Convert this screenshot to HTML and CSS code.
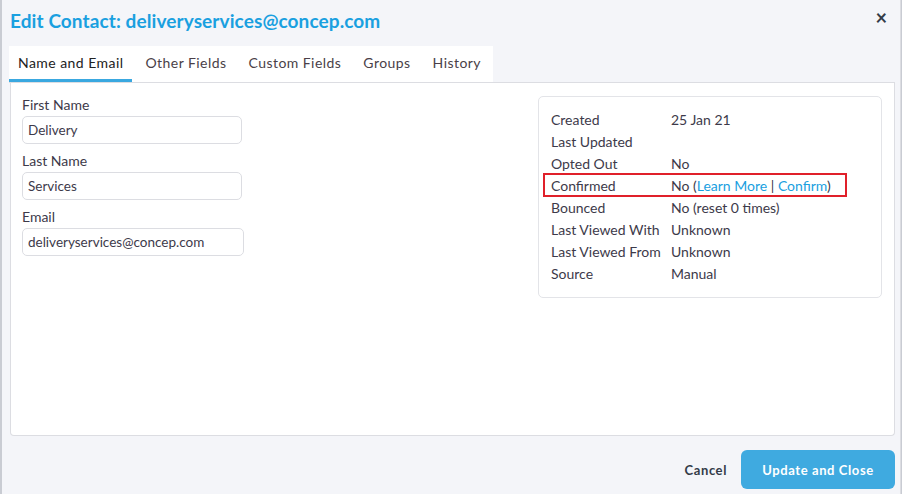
FILE: index.html
```html
<!DOCTYPE html>
<html lang="en">
<head>
    <meta charset="UTF-8">
    <title>Edit Contact</title>
    <link rel="stylesheet" href="styles.css">
</head>
<body>
    <div class="modal">
        <div class="modal-header">
            <h2>Edit Contact: deliveryservices@concep.com</h2>
            <span class="close">&times;</span>
        </div>
        <div class="tabs">
            <a class="tab active">Name and Email</a>
            <a class="tab">Other Fields</a>
            <a class="tab">Custom Fields</a>
            <a class="tab">Groups</a>
            <a class="tab">History</a>
        </div>
        <div class="panel">
            <form class="fields">
                <div class="form-group">
                    <label for="firstName">First Name</label>
                    <input type="text" id="firstName" value="Delivery">
                </div>
                <div class="form-group">
                    <label for="lastName">Last Name</label>
                    <input type="text" id="lastName" value="Services">
                </div>
                <div class="form-group">
                    <label for="email">Email</label>
                    <input type="text" id="email" class="wide" value="deliveryservices@concep.com">
                </div>
            </form>
            <div class="info">
                <div class="row"><span class="key">Created</span><span>25 Jan 21</span></div>
                <div class="row"><span class="key">Last Updated</span><span></span></div>
                <div class="row"><span class="key">Opted Out</span><span>No</span></div>
                <div class="row highlight"><span class="key">Confirmed</span><span>No (<a>Learn More</a> | <a>Confirm</a>)</span></div>
                <div class="row"><span class="key">Bounced</span><span>No (reset 0 times)</span></div>
                <div class="row"><span class="key">Last Viewed With</span><span>Unknown</span></div>
                <div class="row"><span class="key">Last Viewed From</span><span>Unknown</span></div>
                <div class="row"><span class="key">Source</span><span>Manual</span></div>
            </div>
        </div>
        <div class="modal-footer">
            <button class="cancel">Cancel</button>
            <button class="primary">Update and Close</button>
        </div>
    </div>
</body>
</html>
```

FILE: styles.css
```css
html, body {
    margin: 0;
    padding: 0;
    height: 100%;
}
body {
    font-family: Lato, "Open Sans", sans-serif;
    background-color: #c9ccd3;
    color: #3d3a4a;
    padding: 0 1px 0 2px;
    box-sizing: border-box;
}
.modal {
    background-color: #f4f5f9;
    height: 494px;
    box-sizing: border-box;
    padding: 0 5px 0 7px;
    border-right: 1px solid #dcdde2;
}
.modal-header {
    display: flex;
    justify-content: space-between;
    align-items: center;
    height: 40px;
    padding: 0 8px 0 1px;
}
.modal-header h2 {
    margin: 0;
    font-size: 19px;
    font-weight: 700;
    color: #1aa0e0;
    letter-spacing: 0.1px;
}
.close {
    font-size: 20px;
    font-weight: 700;
    color: #333b48;
    line-height: 1;
    margin-top: -6px;
}
.tabs {
    display: flex;
    margin-top: 6px;
    height: 36px;
    border-bottom: 1px solid #dcdde2;
    background: linear-gradient(to right, #fff 484px, transparent 484px);
}
.tab {
    padding: 8px 9px 0;
    margin-right: 4px;
    font-size: 14px;
    letter-spacing: 0.45px;
    color: #4a3f48;
    box-sizing: border-box;
    height: 36px;
}
.tab.active {
    color: #222;
    border-bottom: 3px solid #3aa8e0;
}
.panel {
    background: #fff;
    border: 1px solid #dcdde2;
    border-top: none;
    border-radius: 0 0 4px 4px;
    height: 353px;
    margin-left: 1px;
    display: flex;
    justify-content: space-between;
    padding: 13px 12px 0 11px;
    box-sizing: border-box;
}
.form-group {
    margin-bottom: 8px;
}
.form-group label {
    display: block;
    font-size: 14px;
    margin-bottom: 3px;
}
.form-group input {
    width: 220px;
    height: 28px;
    box-sizing: border-box;
    border: 1px solid #dcdde2;
    border-radius: 5px;
    padding: 0 5px;
    font-family: inherit;
    font-size: 13.5px;
    color: #3d3a4a;
}
.form-group input.wide {
    width: 222px;
}
.info {
    width: 344px;
    height: 202px;
    box-sizing: border-box;
    border: 1px solid #e3e4e8;
    border-radius: 5px;
    padding: 11px 0 0 5px;
}
.row {
    display: flex;
    height: 22px;
    align-items: center;
    font-size: 14px;
    padding-left: 7px;
    box-sizing: border-box;
    width: 302px;
}
.row .key {
    width: 120px;
}
.row a {
    color: #1aa0e0;
}
.row.highlight {
    outline: 2px solid #e0202a;
    outline-offset: -1px;
}
.modal-footer {
    display: flex;
    justify-content: flex-end;
    align-items: center;
    padding-top: 14px;
    gap: 8px;
}
.modal-footer button {
    font-family: inherit;
    font-weight: 700;
    font-size: 13px;
    letter-spacing: 0.6px;
    border: none;
    cursor: pointer;
}
.cancel {
    background: none;
    color: #333b48;
}
.primary {
    background: #3faae0;
    color: #fff;
    width: 154px;
    height: 39px;
    border-radius: 6px;
}
```
